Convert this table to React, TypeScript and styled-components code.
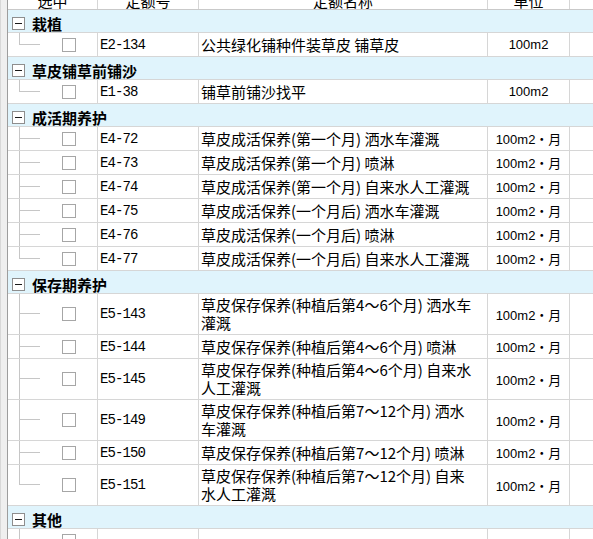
import React from 'react';
import styled, { createGlobalStyle } from 'styled-components';

const GlobalStyle = createGlobalStyle`
  html, body { margin: 0; padding: 0; background: #fff; overflow: hidden; }
  body { font-family: "Noto Sans CJK SC", "Liberation Sans", sans-serif; color: #000; }
`;

const COLS = '90px 101px 289px 82px 1fr';
const LINE = '#d6d6d6';
const GUIDE = '#c6c6c6';

type Item = { code: string; name: string; unit: string };
type Group = { title: string; items: Item[] };

const groups: Group[] = [
  { title: '栽植', items: [{ code: 'E2-134', name: '公共绿化铺种件装草皮 铺草皮', unit: '100m2' }] },
  { title: '草皮铺草前铺沙', items: [{ code: 'E1-38', name: '铺草前铺沙找平', unit: '100m2' }] },
  {
    title: '成活期养护',
    items: [
      { code: 'E4-72', name: '草皮成活保养(第一个月) 洒水车灌溉', unit: '100m2・月' },
      { code: 'E4-73', name: '草皮成活保养(第一个月) 喷淋', unit: '100m2・月' },
      { code: 'E4-74', name: '草皮成活保养(第一个月) 自来水人工灌溉', unit: '100m2・月' },
      { code: 'E4-75', name: '草皮成活保养(一个月后) 洒水车灌溉', unit: '100m2・月' },
      { code: 'E4-76', name: '草皮成活保养(一个月后) 喷淋', unit: '100m2・月' },
      { code: 'E4-77', name: '草皮成活保养(一个月后) 自来水人工灌溉', unit: '100m2・月' },
    ],
  },
  {
    title: '保存期养护',
    items: [
      { code: 'E5-143', name: '草皮保存保养(种植后第4～6个月) 洒水车\n灌溉', unit: '100m2・月' },
      { code: 'E5-144', name: '草皮保存保养(种植后第4～6个月) 喷淋', unit: '100m2・月' },
      { code: 'E5-145', name: '草皮保存保养(种植后第4～6个月) 自来水\n人工灌溉', unit: '100m2・月' },
      { code: 'E5-149', name: '草皮保存保养(种植后第7～12个月) 洒水\n车灌溉', unit: '100m2・月' },
      { code: 'E5-150', name: '草皮保存保养(种植后第7～12个月) 喷淋', unit: '100m2・月' },
      { code: 'E5-151', name: '草皮保存保养(种植后第7～12个月) 自来\n水人工灌溉', unit: '100m2・月' },
    ],
  },
  { title: '其他', items: [{ code: '', name: '', unit: '' }] },
];

const Page = styled.div`
  display: flex;
  width: 593px;
  height: 539px;
  overflow: hidden;
`;

const SideStrip = styled.div`
  flex: none;
  width: 8px;
  box-sizing: border-box;
  background: #efefef;
  border-left: 1px solid #d8d8d8;
  border-right: 1px solid #9d9d9d;
`;

const Table = styled.div`
  flex: 1;
  min-width: 0;
  display: flex;
  flex-direction: column;
`;

const HeaderRow = styled.div`
  flex: none;
  display: grid;
  grid-template-columns: ${COLS};
  height: 10px;
  box-sizing: border-box;
  border-bottom: 1px solid #c9c9c9;
  background: #fff;
`;

const HeaderCell = styled.div`
  display: flex;
  align-items: flex-end;
  justify-content: center;
  overflow: hidden;
  border-right: 1px solid ${LINE};
  font-size: 15px;
  line-height: 15px;
  padding-bottom: 1px;
  &:last-child { border-right: none; }
`;

const HeaderLabel = styled.span`
  flex: none;
  white-space: nowrap;
`;

const GroupRow = styled.div`
  flex: none;
  display: flex;
  align-items: center;
  gap: 7px;
  height: 23px;
  box-sizing: border-box;
  padding: 4px 0 0 4px;
  background: #e0f4fc;
  border-bottom: 1px solid ${LINE};
`;

const Toggle = styled.span`
  flex: none;
  width: 13px;
  height: 13px;
  box-sizing: border-box;
  border: 1px solid #8e8e8e;
  background: #fff;
  display: flex;
  align-items: center;
  justify-content: center;
`;

const Minus = styled.span`
  width: 7px;
  height: 1px;
  background: #1a1a1a;
`;

const GroupTitle = styled.span`
  font-size: 15px;
  font-weight: 700;
  line-height: 17px;
  white-space: nowrap;
`;

const ItemRow = styled.div<{ $tall: boolean }>`
  flex: none;
  display: grid;
  grid-template-columns: ${COLS};
  height: ${({ $tall }) => ($tall ? 41 : 24)}px;
  box-sizing: border-box;
  border-bottom: 1px solid ${LINE};
`;

const Cell = styled.div`
  display: flex;
  align-items: center;
  min-width: 0;
  overflow: hidden;
  border-right: 1px solid ${LINE};
  &:last-child { border-right: none; }
`;

const SelectCell = styled(Cell)`
  align-items: stretch;
`;

const Guide = styled.span`
  flex: none;
  display: grid;
  grid-template-rows: 1fr 1fr;
  width: 21px;
  margin-left: 11px;
`;

const GuideTop = styled.span`
  border-left: 1px solid ${GUIDE};
  border-bottom: 1px solid ${GUIDE};
`;

const GuideBottom = styled.span<{ $last: boolean }>`
  border-left: 1px solid ${({ $last }) => ($last ? 'transparent' : GUIDE)};
`;

const CheckBox = styled.span`
  flex: none;
  align-self: center;
  width: 14px;
  height: 14px;
  box-sizing: border-box;
  margin-left: 22px;
  border: 1px solid #a6a6a6;
  background: #fff;
`;

const CodeCell = styled(Cell)`
  padding-left: 2px;
  font-family: "Liberation Mono", "DejaVu Sans Mono", monospace;
  font-size: 14px;
  letter-spacing: -0.9px;
  white-space: nowrap;
`;

const NameCell = styled(Cell)`
  padding-left: 2px;
  font-size: 15px;
  line-height: 18px;
  white-space: pre;
`;

const UnitCell = styled(Cell)`
  justify-content: center;
  font-family: "Liberation Sans", "Noto Sans CJK SC", sans-serif;
  font-size: 13px;
  white-space: nowrap;
`;

const FillCell = styled(Cell)``;

export default function App() {
  return (
    <>
      <GlobalStyle />
      <Page>
        <SideStrip />
        <Table>
          <HeaderRow>
            {['选中', '定额号', '定额名称', '单位', ''].map((h, i) => (
              <HeaderCell key={i}>
                <HeaderLabel>{h}</HeaderLabel>
              </HeaderCell>
            ))}
          </HeaderRow>
          {groups.map((g) => (
            <React.Fragment key={g.title}>
              <GroupRow>
                <Toggle>
                  <Minus />
                </Toggle>
                <GroupTitle>{g.title}</GroupTitle>
              </GroupRow>
              {g.items.map((it, idx) => (
                <ItemRow key={g.title + idx} $tall={it.name.includes('\n')}>
                  <SelectCell>
                    <Guide>
                      <GuideTop />
                      <GuideBottom $last={idx === g.items.length - 1} />
                    </Guide>
                    <CheckBox />
                  </SelectCell>
                  <CodeCell>{it.code}</CodeCell>
                  <NameCell>{it.name}</NameCell>
                  <UnitCell>{it.unit}</UnitCell>
                  <FillCell />
                </ItemRow>
              ))}
            </React.Fragment>
          ))}
        </Table>
      </Page>
    </>
  );
}
